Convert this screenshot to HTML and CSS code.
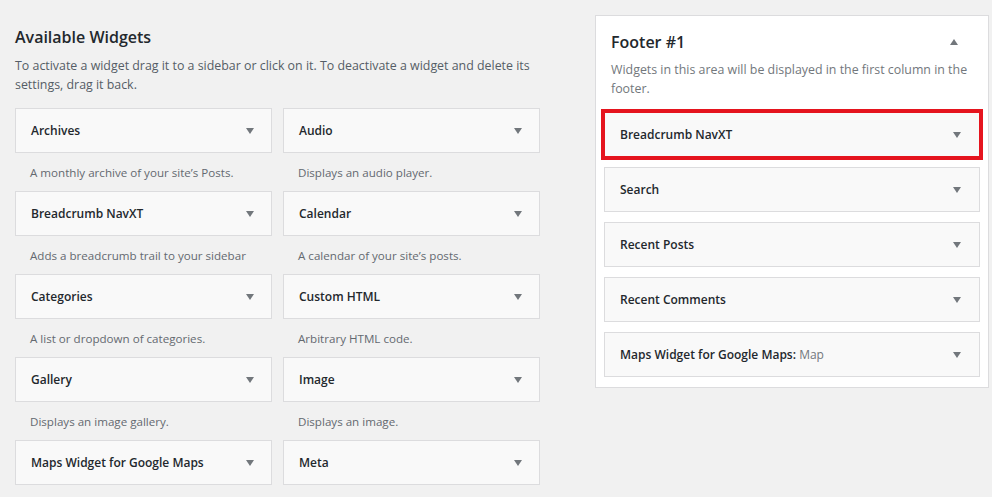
FILE: index.html
```html
<!DOCTYPE html>
<html lang="en">
<head>
    <meta charset="UTF-8">
    <title>Widgets</title>
    <link rel="stylesheet" href="styles.css">
</head>
<body>
    <div class="wrap">
        <div class="available">
            <h2>Available Widgets</h2>
            <p class="intro">To activate a widget drag it to a sidebar or click on it. To deactivate a widget and delete its settings, drag it back.</p>
            <div class="widget-grid">
                <div class="item">
                    <div class="widget"><span>Archives</span><i class="arrow"></i></div>
                    <p class="desc">A monthly archive of your site’s Posts.</p>
                </div>
                <div class="item">
                    <div class="widget"><span>Audio</span><i class="arrow"></i></div>
                    <p class="desc">Displays an audio player.</p>
                </div>
                <div class="item">
                    <div class="widget"><span>Breadcrumb NavXT</span><i class="arrow"></i></div>
                    <p class="desc">Adds a breadcrumb trail to your sidebar</p>
                </div>
                <div class="item">
                    <div class="widget"><span>Calendar</span><i class="arrow"></i></div>
                    <p class="desc">A calendar of your site’s posts.</p>
                </div>
                <div class="item">
                    <div class="widget"><span>Categories</span><i class="arrow"></i></div>
                    <p class="desc">A list or dropdown of categories.</p>
                </div>
                <div class="item">
                    <div class="widget"><span>Custom HTML</span><i class="arrow"></i></div>
                    <p class="desc">Arbitrary HTML code.</p>
                </div>
                <div class="item">
                    <div class="widget"><span>Gallery</span><i class="arrow"></i></div>
                    <p class="desc">Displays an image gallery.</p>
                </div>
                <div class="item">
                    <div class="widget"><span>Image</span><i class="arrow"></i></div>
                    <p class="desc">Displays an image.</p>
                </div>
                <div class="item">
                    <div class="widget"><span>Maps Widget for Google Maps</span><i class="arrow"></i></div>
                </div>
                <div class="item">
                    <div class="widget"><span>Meta</span><i class="arrow"></i></div>
                </div>
            </div>
        </div>

        <div class="sidebar">
            <div class="sidebar-head">
                <h2>Footer #1</h2>
                <i class="arrow up"></i>
            </div>
            <p class="sidebar-desc">Widgets in this area will be displayed in the first column in the footer.</p>
            <div class="sidebar-list">
                <div class="widget highlight"><span>Breadcrumb NavXT</span><i class="arrow"></i></div>
                <div class="widget"><span>Search</span><i class="arrow"></i></div>
                <div class="widget"><span>Recent Posts</span><i class="arrow"></i></div>
                <div class="widget"><span>Recent Comments</span><i class="arrow"></i></div>
                <div class="widget"><span>Maps Widget for Google Maps: <em>Map</em></span><i class="arrow"></i></div>
            </div>
        </div>
    </div>
</body>
</html>
```

FILE: styles.css
```css
body {
    margin: 0;
    padding: 0;
    background: #f1f1f1;
    color: #23282d;
    font-family: "Open Sans", "Noto Sans", sans-serif;
    font-size: 12px;
    overflow: hidden;
}
.wrap {
    display: flex;
    align-items: flex-start;
    padding: 15px 0 0 15px;
}
.available {
    width: 525px;
}
.available h2 {
    margin: 10px 0 0;
    font-size: 16px;
    font-weight: 600;
    line-height: 24px;
}
.intro {
    margin: 7px 0 0;
    color: #555d66;
    font-size: 12.4px;
    line-height: 19px;
}
.widget-grid {
    display: grid;
    grid-template-columns: 257px 257px;
    column-gap: 11px;
    margin-top: 14px;
}
.widget {
    display: flex;
    align-items: center;
    justify-content: space-between;
    height: 43px;
    padding: 0 17px 0 15px;
    background: #f9f9f9;
    border: 1px solid #dcdcde;
    font-weight: 600;
    white-space: nowrap;
}
.widget em {
    font-style: normal;
    font-weight: 400;
    color: #72777c;
}
.desc {
    margin: 0;
    height: 38px;
    padding: 0 15px;
    line-height: 40px;
    color: #646970;
    font-size: 11.6px;
    white-space: nowrap;
}
.arrow {
    width: 0;
    height: 0;
    border-left: 4.5px solid transparent;
    border-right: 4.5px solid transparent;
    border-top: 6px solid #72777c;
}
.arrow.up {
    border-top: none;
    border-bottom: 6px solid #72777c;
}
.sidebar {
    width: 376px;
    margin-left: 55px;
    padding: 0 8px 10px;
    background: #fff;
    border: 1px solid #dcdcde;
}
.sidebar-head {
    display: flex;
    align-items: center;
    justify-content: space-between;
    padding: 13px 22px 0 7px;
}
.sidebar-head h2 {
    margin: 0;
    font-size: 16px;
    font-weight: 600;
    line-height: 26px;
}
.sidebar-desc {
    margin: 5px 0 0;
    padding: 0 7px;
    color: #72777c;
    font-size: 12.4px;
    line-height: 19px;
}
.sidebar-list {
    display: flex;
    flex-direction: column;
    gap: 10px;
    margin-top: 14px;
}
.sidebar-list .widget {
    padding-right: 18px;
}
.widget.highlight {
    outline: 4px solid #e5141e;
    outline-offset: -1px;
}
```
